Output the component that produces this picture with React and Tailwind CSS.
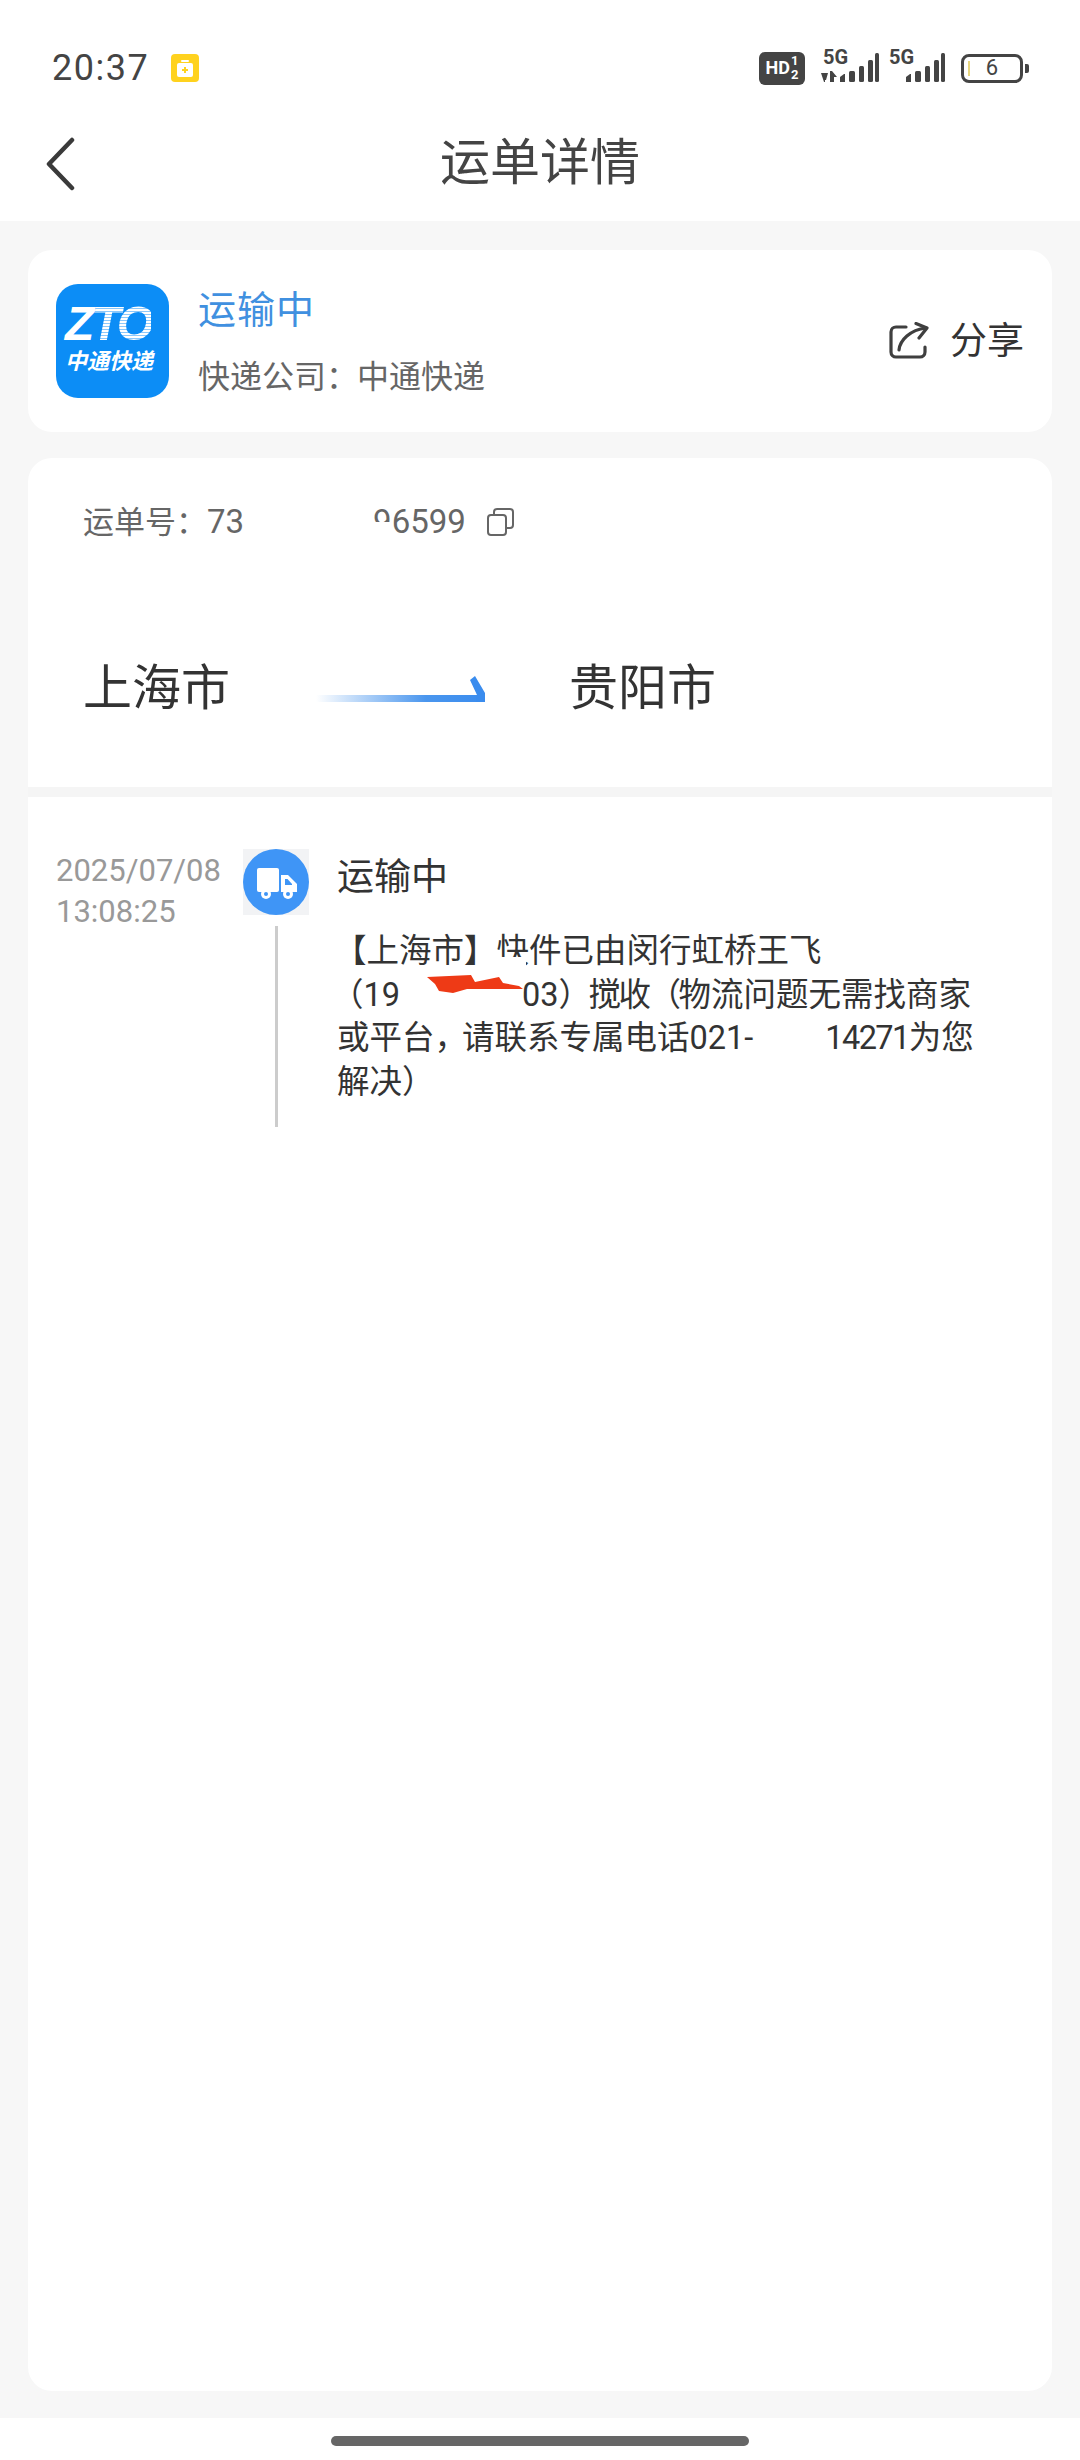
import React from 'react';

const SignalBars = ({ arrows }) => (
    <svg width="58" height="30" viewBox="0 0 58 30" className="block">
        {arrows && (
            <g fill="#444">
                <path d="M0 20 H7 L5 27 H4 V29 H3 Z" />
                <path d="M9 29 V18 H11 L16 24 H13 V29 Z" />
            </g>
        )}
        <g fill="#444">
            <path d="M19 24 L23 21 H24 V29 H19 Z" />
            <rect x="28" y="18" width="6" height="11" rx="1.5" />
            <rect x="38" y="13" width="5" height="16" rx="1.5" />
            <rect x="47" y="7" width="5" height="22" rx="1.5" />
            <rect x="54" y="0" width="4" height="29" rx="1.5" />
        </g>
    </svg>
);

const NetworkGroup = ({ arrows }) => (
    <div className="relative w-[62px] h-[31px]">
        <SignalBars arrows={arrows} />
        <span className="absolute left-[2px] top-[-7px] text-[20px] leading-[22px] font-bold text-[#444]">5G</span>
    </div>
);

const StatusBar = () => (
    <div className="h-[104px] pt-[32px] pl-[52px] pr-[51px] flex items-center justify-between shrink-0">
        <div className="flex items-center">
            <span className="text-[36px] leading-none font-normal text-[#444] tracking-[1.5px]">20:37</span>
            <div className="ml-[22px] w-[28px] h-[28px] rounded-[4px] bg-[#ffd21e] flex items-center justify-center">
                <svg width="16" height="17" viewBox="0 0 16 17">
                    <rect x="4" y="0" width="8" height="2" rx="1" fill="#fff" />
                    <rect x="0" y="3" width="16" height="14" rx="2" fill="#fff" />
                    <path d="M7 7 H9 V9 H11 V11 H9 V13 H7 V11 H5 V9 H7 Z" fill="#ffd21e" />
                </svg>
            </div>
        </div>
        <div className="flex items-center">
            <div className="w-[46px] h-[33px] rounded-[6px] bg-[#444] flex items-center justify-center text-white font-bold">
                <span className="text-[18px] leading-none">HD</span>
                <span className="ml-[1px] flex flex-col items-center text-[13px] leading-[14px]">
                    <span>1</span>
                    <span>2</span>
                </span>
            </div>
            <div className="ml-[16px]">
                <NetworkGroup arrows />
            </div>
            <div className="ml-[4px]">
                <NetworkGroup />
            </div>
            <div className="ml-[12px] flex items-center">
                <div className="relative w-[62px] h-[29px] rounded-[8px] border-[3px] border-[#444] flex items-center justify-center">
                    <span className="absolute left-[4px] top-[4px] w-[2px] h-[15px] bg-[#e8d680]" />
                    <span className="text-[22px] leading-none text-[#444]">6</span>
                </div>
                <div className="ml-[2px] w-[4px] h-[9px] rounded-r-[2px] bg-[#444]" />
            </div>
        </div>
    </div>
);

const Header = () => (
    <div className="relative h-[117px] shrink-0 flex items-center justify-center">
        <svg width="30" height="54" viewBox="0 0 30 54" className="absolute left-[46px] top-[33px]" fill="none" stroke="#3a3a3a" strokeWidth="4.5" strokeLinecap="round" strokeLinejoin="round">
            <path d="M26 3 L3 27 L26 51" />
        </svg>
        <h1 className="text-[50px] leading-none font-normal text-[#444]">运单详情</h1>
    </div>
);

const ZtoLogo = () => (
    <div className="w-[113px] h-[114px] rounded-[22px] bg-[#0c8df6] flex flex-col items-start pl-[9px] pt-[20px] shrink-0 text-white">
        <div className="text-[48px] leading-[40px] font-black italic tracking-[-3px] [font-family:'Liberation_Sans',sans-serif]">
            <span>Z</span>
            <span className="bg-[repeating-linear-gradient(180deg,#fff_0px,#fff_2px,#8cc8fb_2px,#8cc8fb_3px)] bg-clip-text text-transparent">TO</span>
        </div>
        <div className="mt-[5px] text-[22px] leading-[26px] font-bold italic whitespace-nowrap">中通快递</div>
    </div>
);

const ShareIcon = () => (
    <svg width="40" height="38" viewBox="0 0 40 38" fill="none" stroke="#3f3f3f" strokeWidth="3.2" strokeLinecap="round" strokeLinejoin="round">
        <path d="M17 5 H7 a5 5 0 0 0 -5 5 V30 a5 5 0 0 0 5 5 H31 a5 5 0 0 0 5 -5 V25" />
        <path d="M10 28 C11 18 21 8 37 6" />
        <path d="M27 1.5 L38 6 L30 16" />
    </svg>
);

const CopyIcon = () => (
    <svg width="27" height="28" viewBox="0 0 27 28" fill="none" stroke="#666" strokeWidth="2" className="block">
        <rect x="1" y="7" width="18" height="20" rx="3" />
        <path d="M7 7 V4 a3 3 0 0 1 3 -3 H23 a3 3 0 0 1 3 3 V17 a3 3 0 0 1 -3 3 H19" />
    </svg>
);

const RouteArrow = () => (
    <svg width="170" height="27" viewBox="0 0 170 27" className="block">
        <defs>
            <linearGradient id="routeFade" x1="0" y1="0" x2="1" y2="0">
                <stop offset="0" stopColor="#ffffff" />
                <stop offset="0.65" stopColor="#4a96ee" />
                <stop offset="1" stopColor="#3a8cee" />
            </linearGradient>
        </defs>
        <rect x="0" y="19" width="169" height="7" fill="url(#routeFade)" />
        <polygon points="154,4 159,0 169,17 169,26 160,26 160,19 161,19" fill="#3a8cee" />
    </svg>
);

const TruckBadge = () => (
    <div className="w-[66px] h-[66px] bg-[#f2f3f5] shrink-0">
        <svg width="66" height="66" viewBox="0 0 66 66" className="block">
            <circle cx="33" cy="33" r="33" fill="#3f95f6" />
            <rect x="14" y="19" width="22" height="24" rx="2" fill="#fff" />
            <path d="M38 26 H45 L54 35 V43 H38 Z" fill="#fff" />
            <path d="M42 30 H44.5 L49 35 V36 H42 Z" fill="#3f95f6" />
            <circle cx="23" cy="45" r="5" fill="#fff" />
            <circle cx="23" cy="45" r="2" fill="#3f95f6" />
            <circle cx="45" cy="45" r="5" fill="#fff" />
            <circle cx="45" cy="45" r="2" fill="#3f95f6" />
        </svg>
    </div>
);

const App = () => {
    return (
        <div className="w-[1080px] h-[2460px] bg-white flex flex-col overflow-hidden [font-family:Roboto,'Noto_Sans_CJK_SC',sans-serif]">
            <StatusBar />
            <Header />

            <div className="flex-1 bg-[#f7f7f7] px-[28px] pt-[29px] pb-[27px] flex flex-col">
                {/* courier summary */}
                <div className="h-[182px] rounded-[24px] bg-white pl-[28px] pr-[28px] flex items-center shrink-0">
                    <ZtoLogo />
                    <div className="ml-[29px] flex-1">
                        <div className="text-[38px] leading-[48px] text-[#4090e0] tracking-[1px]">运输中</div>
                        <div className="mt-[23px] text-[32px] leading-[40px] text-[#666]">
                            快递公司<span className="tracking-[-1px]">：</span>中通快递
                        </div>
                    </div>
                    <div className="flex items-center">
                        <ShareIcon />
                        <span className="ml-[21px] text-[37px] leading-none text-[#333]">分享</span>
                    </div>
                </div>

                <div className="mt-[26px] flex-1 rounded-[24px] bg-white flex flex-col">
                    <div className="h-[339px] border-b-[10px] border-[#f5f5f5] pl-[55px] shrink-0">
                        <div className="pt-[45px] h-[83px] flex items-center text-[31px] leading-[38px] text-[#666]">
                            <span>运单号：<span className="text-[33px]">73</span></span>
                            <span className="relative ml-[129px] text-[33px]">
                                96599
                                <span className="absolute left-0 top-[19px] w-[19px] h-[16px] bg-white" />
                            </span>
                            <span className="ml-[21px]">
                                <CopyIcon />
                            </span>
                        </div>
                        <div className="mt-[118px] flex items-center text-[49px] leading-[60px] text-[#333]">
                            <span className="w-[233px]">上海市</span>
                            <RouteArrow />
                            <span className="ml-[83px]">贵阳市</span>
                        </div>
                    </div>

                    {/* tracking timeline */}
                    <div className="flex pl-[28px] pt-[52px]">
                        <div className="mt-[1px] w-[187px] text-[31px] leading-[41px] text-[#999] shrink-0">
                            <div>2025/07/08</div>
                            <div>13:08:25</div>
                        </div>
                        <div className="w-[66px] flex flex-col items-center shrink-0">
                            <TruckBadge />
                            <div className="mt-[11px] w-[3px] h-[201px] bg-[#cccccc]" />
                        </div>
                        <div className="ml-[28px]">
                            <div className="mt-[3px] text-[37px] leading-[52px] text-[#333]">运输中</div>
                            <div className="relative mt-[26px] w-[660px] text-[32.5px] leading-[43.5px] text-[#333]">
                                <div className="-ml-[3px] whitespace-nowrap">【上海市】快件已由闵行虹桥王飞</div>
                                <div className="-ml-[6px] whitespace-nowrap">
                                    （19<span className="inline-block w-[122px]" />03<span className="tracking-[-2.5px]">）搅收（</span>物流问题无需找商家
                                </div>
                                <div className="whitespace-nowrap">
                                    或平台<span className="tracking-[-5px]">，</span>请联系专属电话021-<span className="inline-block w-[72px]" /><span className="tracking-[-1.6px]">14271</span>为您
                                </div>
                                <div className="whitespace-nowrap">解决）</div>
                                {/* scratched-out parts of the message */}
                                <span className="absolute left-[159px] top-[27px] w-[30px] h-[11px] bg-white" />
                                <svg width="96" height="20" viewBox="0 0 96 20" className="absolute left-[90px] top-[45px]">
                                    <path d="M0 2 L44 0 L48 7 L72 2 L76 8 L92 11 L96 14 L40 14 L26 18 L12 16 L8 9 Z" fill="#ee3a16" />
                                </svg>
                            </div>
                        </div>
                    </div>
                </div>
            </div>

            {/* gesture bar */}
            <div className="h-[42px] flex items-start justify-center pt-[18px] shrink-0">
                <div className="w-[418px] h-[10px] rounded-full bg-[#666]" />
            </div>
        </div>
    );
};

export default App;
